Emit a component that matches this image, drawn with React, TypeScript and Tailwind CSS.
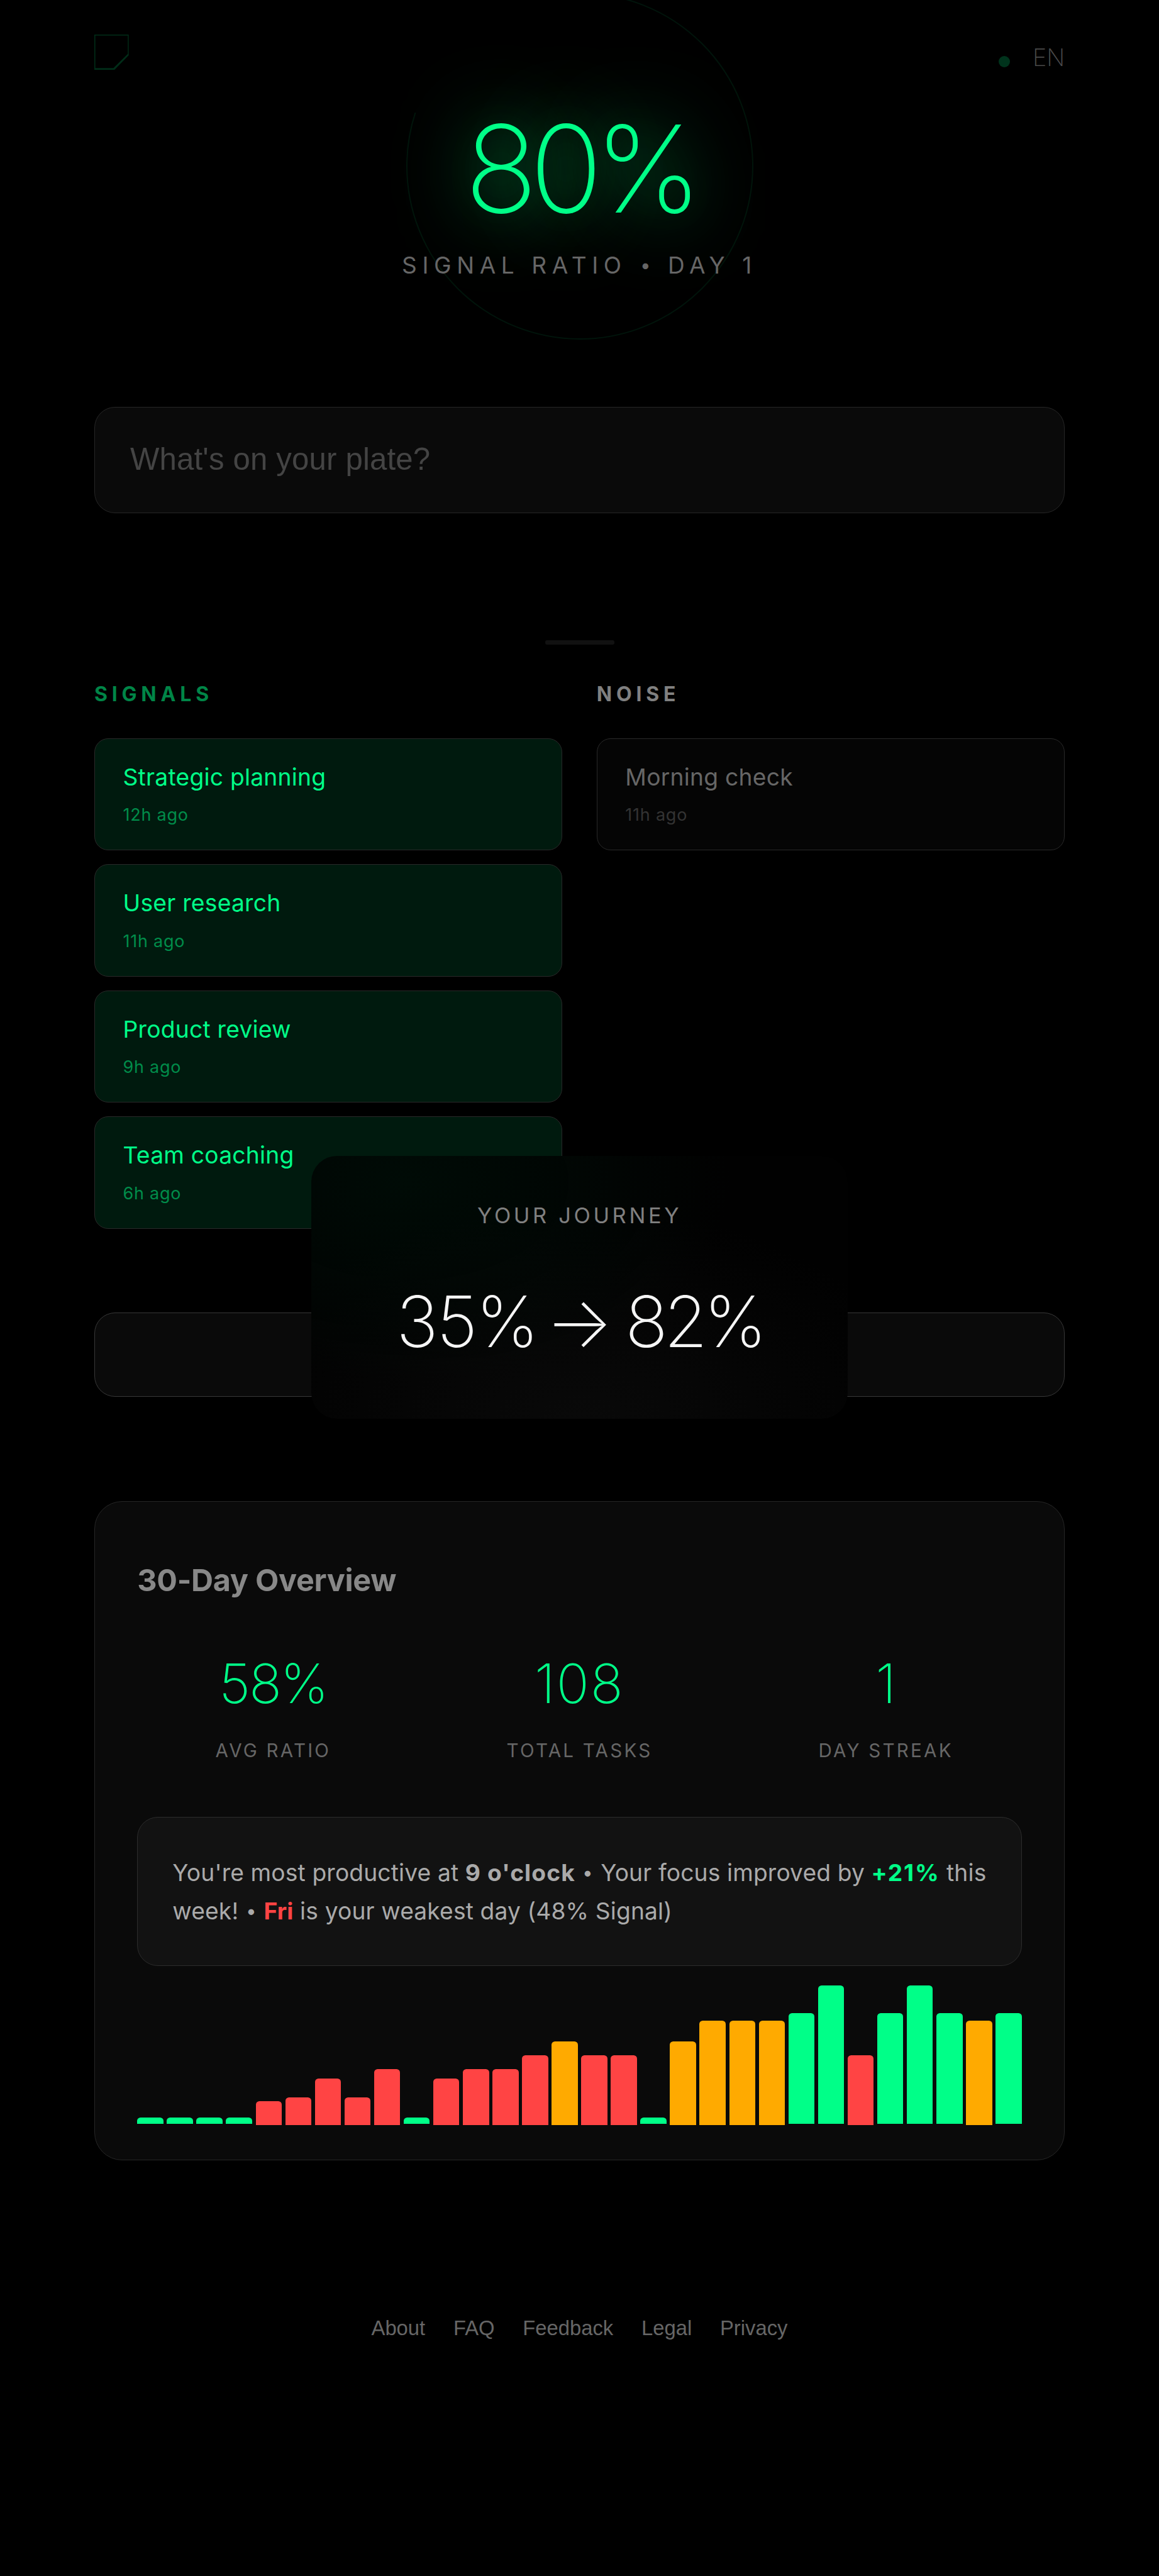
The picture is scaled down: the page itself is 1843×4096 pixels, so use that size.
import React from "react";

type Task = { title: string; time: string };

const signals: Task[] = [
  { title: "Strategic planning", time: "12h ago" },
  { title: "User research", time: "11h ago" },
  { title: "Product review", time: "9h ago" },
  { title: "Team coaching", time: "6h ago" },
];

const tones = { g: "mb-[1.7px] bg-[#00ff88]", r: "bg-[#ff4444]", o: "bg-[#ffaa00]" };

const bars: [keyof typeof tones, number][] = [
  ["g", 10.7], ["g", 10.7], ["g", 10.7], ["g", 10.7], ["r", 37.5], ["r", 44.4], ["r", 74], ["r", 44.4], ["r", 89], ["g", 10.7],
  ["r", 74], ["r", 89], ["r", 89], ["r", 111.3], ["o", 133.1], ["r", 111.3], ["r", 111.3], ["g", 10.7], ["o", 133.1], ["o", 166],
  ["o", 166], ["o", 166], ["g", 176.4], ["g", 220.3], ["r", 111.3], ["g", 176.4], ["g", 220.3], ["g", 176.4], ["o", 166], ["g", 176.4],
];

const stats = [
  { value: "58%", label: "AVG RATIO", tracking: "tracking-[-2.2px]" },
  { value: "108", label: "TOTAL TASKS", tracking: "tracking-[2px]" },
  { value: "1", label: "DAY STREAK", tracking: "tracking-normal" },
];

function Bullet() {
  return <span className="-mx-px inline-block scale-[0.8]">•</span>;
}

function Header() {
  return (
    <div className="absolute inset-x-[150px] top-[54.6px] flex items-start justify-between">
      <svg className="h-[56px] w-[54.6px]" viewBox="0 0 80 82" fill="#002d18" fillRule="evenodd">
        <path d="M0 0H80V48.5L47 82H0ZM2.3 2V78H44.5L78 45V2Z" />
      </svg>
      <div className="flex items-start gap-[36.5px]">
        <span className="mt-[34.3px] size-[17.8px] rounded-full bg-[#00331c]" />
        <span className="mt-[13px] text-[38px] leading-[46px] font-[220] tracking-[-0.3px] text-[#4a4a4a]">EN</span>
      </div>
    </div>
  );
}

function Hero() {
  return (
    <div className="relative flex h-[647px] flex-col items-center">
      <svg className="absolute top-[-12px] left-1/2 size-[552px] -translate-x-1/2" viewBox="0 0 552 552" fill="none">
        <circle cx="276" cy="276" r="275" stroke="#00140b" strokeWidth="2" pathLength="100" strokeDasharray="80 20" transform="rotate(-90 276 276)" />
      </svg>
      <div className="relative mt-[172px] text-[192px] leading-[192px] font-extralight tracking-[-12.77px] text-[#00ff88] [text-shadow:0_0_120px_rgba(0,255,136,0.8),0_0_70px_rgba(0,255,136,0.15)]">
        80%
      </div>
      <div className="relative mt-[34.8px] text-[37px] leading-[46px] tracking-[8.6px] text-[#666666]">
        SIGNAL RATIO <Bullet /> DAY 1
      </div>
    </div>
  );
}

function TaskCard({ task, signal }: { task: Task; signal?: boolean }) {
  return (
    <div
      className={
        "flex h-[178.5px] flex-col rounded-[22px] border border-[#292929] px-[44.5px] pt-[37.9px] " +
        (signal ? "bg-[#001a0e] text-[#00ff88]" : "bg-[#050505] text-[#666666]")
      }
    >
      <div className="text-[37.2px] leading-[46px] tracking-[0.25px]">{task.title}</div>
      <div className={"mt-[21.6px] text-[27px] leading-[32px] tracking-[0.77px] " + (signal ? "text-[#008c4a]" : "text-[#333333]")}>{task.time}</div>
    </div>
  );
}

function Columns() {
  return (
    <div className="grid grid-cols-2 gap-[54.6px]">
      <div>
        <h2 className="mb-[49.5px] text-[32px] leading-[40px] font-bold tracking-[6.8px] text-[#008547]">SIGNALS</h2>
        <div className="flex flex-col gap-[22px]">
          {signals.map((t) => (
            <TaskCard key={t.title} task={t} signal />
          ))}
        </div>
      </div>
      <div>
        <h2 className="mb-[49.5px] text-[32px] leading-[40px] font-bold tracking-[6.8px] text-[#808080]">NOISE</h2>
        <TaskCard task={{ title: "Morning check", time: "11h ago" }} />
      </div>
    </div>
  );
}

function JourneyPopup() {
  return (
    <div className="absolute top-[1837.8px] left-[495.2px] flex h-[418.5px] w-[853px] flex-col items-center rounded-[41px] bg-[#010101] bg-[radial-gradient(ellipse_60%_75%_at_18%_10%,#000b06,transparent),radial-gradient(ellipse_65%_80%_at_50%_100%,#090909,transparent)]">
      <div className="mt-[75.2px] text-[34.4px] leading-[40px] tracking-[4.64px] text-[#808080]">YOUR JOURNEY</div>
      <div className="mt-[81.3px] flex text-[112.6px] leading-[134px] font-[250] whitespace-nowrap text-[#f5f5f5]">
        <span className="tracking-[-2.6px]">35%</span>
        <span className="mr-[19px] ml-[13px]">→</span>
        <span className="tracking-[-6.2px]">82%</span>
      </div>
    </div>
  );
}

function Overview() {
  return (
    <section className="mt-[165.6px] h-[1048.3px] rounded-[44px] border border-[#262626] bg-[#0a0a0a] px-[67.3px] pt-[95.4px]">
      <h3 className="text-[48.5px] leading-[60px] font-bold tracking-[-0.3px] text-[#888888]">30-Day Overview</h3>
      <div className="mt-[80.8px] grid grid-cols-3 gap-[55px] text-center">
        {stats.map((s) => (
          <div key={s.label}>
            <div className={"text-[86.2px] leading-[106px] font-[220] text-[#00ff88] " + s.tracking}>{s.value}</div>
            <div className="mt-[34.4px] text-[29.6px] leading-[36px] tracking-[3.2px] text-[#666666]">{s.label}</div>
          </div>
        ))}
      </div>
      <div className="mt-[88.4px] h-[237px] rounded-[33px] border border-[#2c2c2c] bg-[#121212] pt-[57px] pl-[55px] text-[37.2px] leading-[61.2px] tracking-[0.14px] text-[#aaaaaa]">
        <div className="whitespace-nowrap">
          You're most productive at <b className="font-bold tracking-[1.1px]">9 o'clock</b> <Bullet /> Your focus improved by{" "}
          <b className="font-bold tracking-[1.8px] text-[#00ff88]">+21%</b> this
        </div>
        <div className="whitespace-nowrap">
          week! <Bullet /> <b className="font-bold text-[#ff4444]">Fri</b> is your weakest day (48% Signal)
        </div>
      </div>
      <div className="mt-[31px] flex h-[222px] items-end gap-[5.5px]">
        {bars.map(([tone, h], i) => (
          <div key={i} className={"flex-1 rounded-t-[5.5px] " + tones[tone]} style={{ height: h }} />
        ))}
      </div>
    </section>
  );
}

export default function App() {
  return (
    <div className="relative h-[4096px] w-[1843px] overflow-hidden bg-black px-[150px] font-['Inter',sans-serif]">
      <Header />
      <Hero />
      <div className="flex h-[168.6px] items-center rounded-[33px] border border-[#262626] bg-[#0a0a0a] px-[56px] font-['Liberation_Sans',sans-serif] text-[49.15px] tracking-[0.17px] text-[#444444]">
        What's on your plate?
      </div>
      <div className="mx-auto mt-[202.4px] h-[7px] w-[110px] rounded-[3px] bg-[#111111]" />
      <div className="mt-[59.4px]">
        <Columns />
      </div>
      <div className="mt-[133.1px] h-[134.4px] rounded-[33px] border border-[#383838] bg-[#0a0a0a]" />
      <Overview />
      <footer className="mt-[246.6px] flex justify-center gap-[44.8px] font-['Liberation_Sans',sans-serif] text-[32.77px] leading-[40px] text-[#666666]">
        {["About", "FAQ", "Feedback", "Legal", "Privacy"].map((l) => (
          <span key={l}>{l}</span>
        ))}
      </footer>
      <JourneyPopup />
    </div>
  );
}
